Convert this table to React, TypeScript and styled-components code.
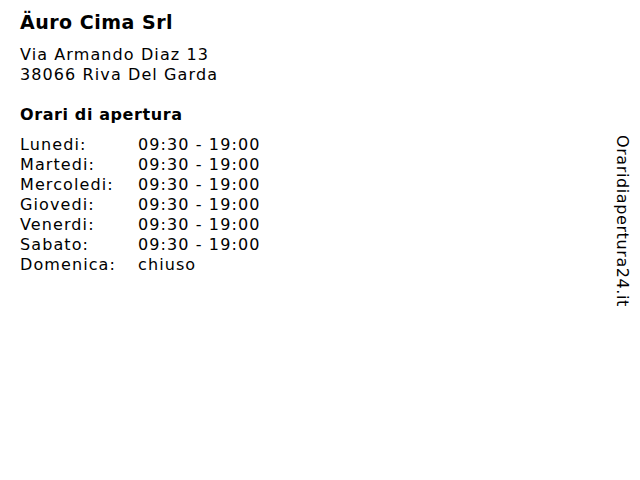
import React from 'react'
import styled, { createGlobalStyle } from 'styled-components'

const GlobalStyle = createGlobalStyle`
  html, body {
    margin: 0;
    padding: 0;
    background: #fff;
  }
  body {
    font-family: "DejaVu Sans", Verdana, sans-serif;
    color: #000;
  }
`

const hours = [
  { day: 'Lunedi:', time: '09:30 - 19:00' },
  { day: 'Martedi:', time: '09:30 - 19:00' },
  { day: 'Mercoledi:', time: '09:30 - 19:00' },
  { day: 'Giovedi:', time: '09:30 - 19:00' },
  { day: 'Venerdi:', time: '09:30 - 19:00' },
  { day: 'Sabato:', time: '09:30 - 19:00' },
  { day: 'Domenica:', time: 'chiuso' },
]

const App = () => {
  return (
    <>
      <GlobalStyle />
      <Page>
        <Main>
          <Title>Äuro Cima Srl</Title>
          <Address>
            Via Armando Diaz 13<br />
            38066 Riva Del Garda
          </Address>
          <Subtitle>Orari di apertura</Subtitle>
          <Hours>
            {hours.map((h) => (
              <React.Fragment key={h.day}>
                <Day>{h.day}</Day>
                <Time>{h.time}</Time>
              </React.Fragment>
            ))}
          </Hours>
        </Main>
        <Brand>Oraridiapertura24.it</Brand>
      </Page>
    </>
  )
}

const Page = styled.div`
  width: 640px;
  height: 480px;
  display: flex;
  justify-content: space-between;
  box-sizing: border-box;
  padding: 10px 8px 0 20px;
`
const Main = styled.div`
  display: flex;
  flex-direction: column;
`
const Title = styled.h1`
  margin: 0;
  font-size: 19px;
  font-weight: bold;
  line-height: 24px;
  letter-spacing: 0.5px;
`
const Address = styled.div`
  margin-top: 11px;
  font-size: 16px;
  line-height: 20px;
  letter-spacing: 1.1px;
`
const Subtitle = styled.h2`
  margin: 19px 0 0;
  font-size: 16px;
  font-weight: bold;
  line-height: 22px;
  letter-spacing: 0.6px;
`
const Hours = styled.div`
  margin-top: 9px;
  display: grid;
  grid-template-columns: 118px auto;
  font-size: 16px;
  line-height: 20px;
  letter-spacing: 1.1px;
`
const Day = styled.span``
const Time = styled.span``
const Brand = styled.div`
  margin-top: 125px;
  writing-mode: vertical-rl;
  font-size: 16px;
  line-height: 20px;
  letter-spacing: 0.6px;
  align-self: flex-start;
`

export default App
